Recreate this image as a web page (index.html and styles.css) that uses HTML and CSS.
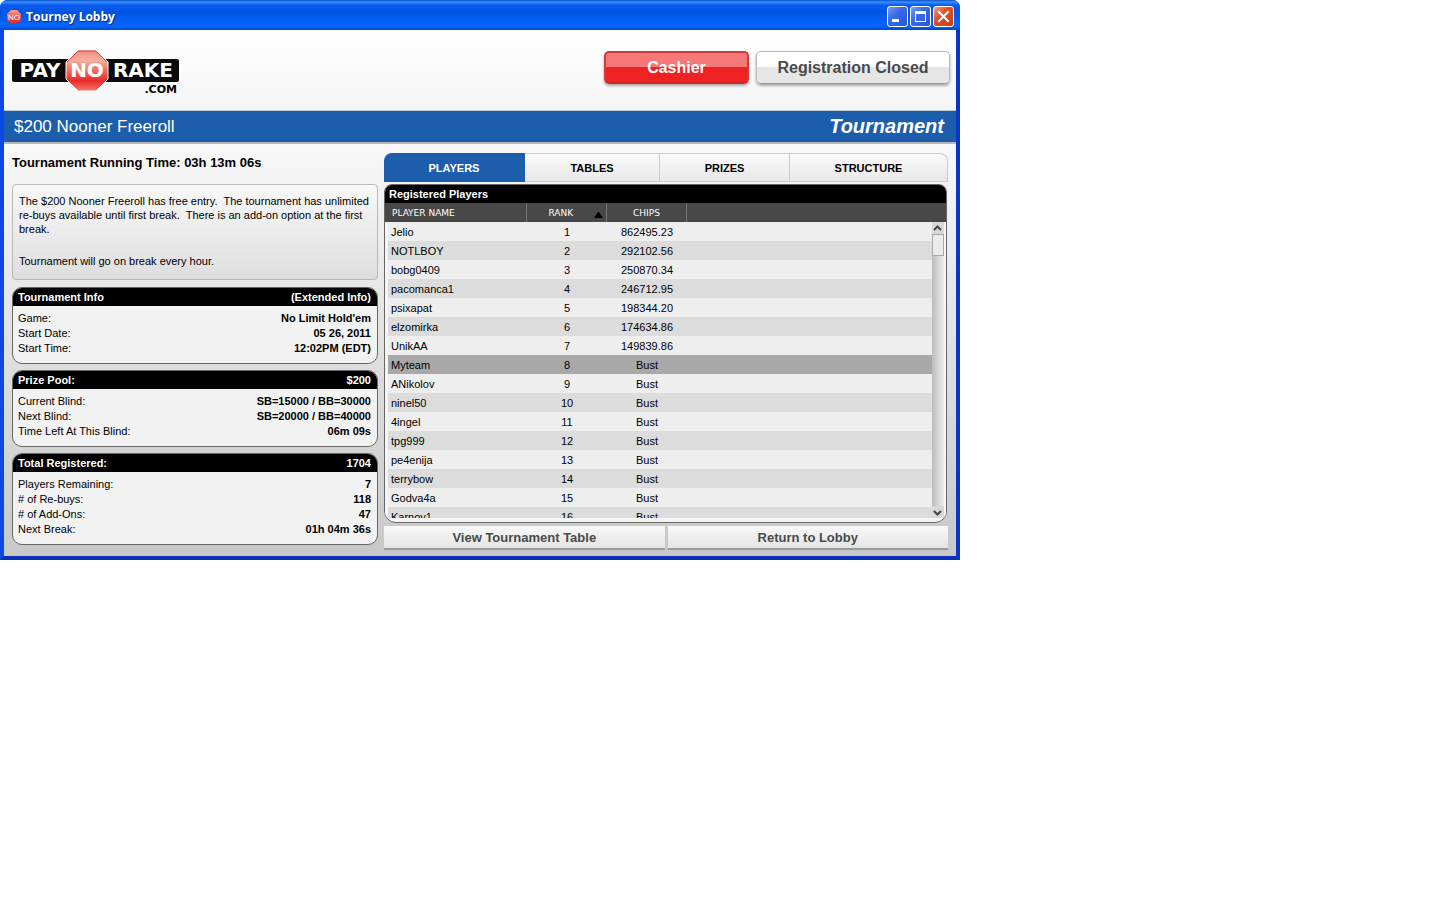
FILE: index.html
```
<!DOCTYPE html>
<html lang="en">
<head>
  <meta charset="UTF-8">
  <meta name="viewport" content="width=device-width, initial-scale=1.0">
  <title>Tourney Lobby</title>
  <link rel="stylesheet" href="styles.css">
</head>
<body>
  <div class="window">
    <div class="titlebar">
      <svg class="app-icon" width="16" height="16" viewBox="0 0 16 16">
        <defs>
          <linearGradient id="appRed" x1="0" y1="0" x2="0" y2="1">
            <stop offset="0" stop-color="#f4a08c"/>
            <stop offset="1" stop-color="#e81c1c"/>
          </linearGradient>
        </defs>
        <path d="M5 1h6l4 4v6l-4 4H5l-4-4V5z" fill="url(#appRed)"/>
        <text x="8" y="11" text-anchor="middle" class="app-icon-text">NO</text>
      </svg>
      <h1>Tourney Lobby</h1>
      <div class="win-buttons">
        <button class="win-btn" aria-label="Minimize">
          <svg width="19" height="19" viewBox="0 0 19 19"><path d="M4 12h7v3H4z" fill="#fff"/></svg>
        </button>
        <button class="win-btn" aria-label="Maximize">
          <svg width="19" height="19" viewBox="0 0 19 19"><path d="M4 4h11v11H4zM5 7v7h9V7z" fill="#fff" fill-rule="evenodd"/></svg>
        </button>
        <button class="win-btn win-close" aria-label="Close">
          <svg width="19" height="19" viewBox="0 0 19 19"><path d="M5 5l9 9M14 5l-9 9" stroke="#fff" stroke-width="2" stroke-linecap="square"/></svg>
        </button>
      </div>
    </div>

    <div class="header">
      <svg class="logo" width="170" height="46" viewBox="0 0 170 46" role="img" aria-label="PayNoRake.com">
        <defs>
          <linearGradient id="logoRed" x1="0" y1="0" x2="0" y2="1">
            <stop offset="0" stop-color="#ef8a80"/>
            <stop offset=".25" stop-color="#f6b0a0"/>
            <stop offset=".55" stop-color="#ee6055"/>
            <stop offset=".75" stop-color="#ea2a28"/>
            <stop offset="1" stop-color="#f07a70"/>
          </linearGradient>
        </defs>
        <rect x="0" y="8" width="167" height="23" rx="2" fill="#0a0a0a"/>
        <path d="M66 -1h18l12 12v17L84 40H66L54 28V11z" fill="url(#logoRed)" stroke="#fff" stroke-width="1"/>
        <path d="M55 11L66 0h18l11 11" fill="none" stroke="#d8453f" stroke-width="1"/>
        <g class="logo-text">
          <text x="28" y="26" text-anchor="middle">PAY</text>
          <text x="75" y="26" text-anchor="middle">NO</text>
          <text x="131" y="26" text-anchor="middle">RAKE</text>
        </g>
        <text x="165" y="42" text-anchor="end" class="logo-dotcom">.COM</text>
      </svg>
      <div class="header-buttons">
        <button class="big-btn big-btn-red">Cashier</button>
        <button class="big-btn big-btn-wide">Registration Closed</button>
      </div>
    </div>

    <div class="banner">
      <h2>$200 Nooner Freeroll</h2>
      <span class="banner-type">Tournament</span>
    </div>

    <div class="content">
      <div class="sidebar">
        <p class="running-time">Tournament Running Time: <span>03h 13m 06s</span></p>

        <div class="description">
          <p>The $200 Nooner Freeroll has free entry.&nbsp; The tournament has unlimited re-buys available until first break.&nbsp; There is an add-on option at the first break.</p>
          <p>Tournament will go on break every hour.</p>
        </div>

        <div class="info-box">
          <div class="info-head"><span>Tournament Info</span><a href="#">(Extended Info)</a></div>
          <dl>
            <div><dt>Game:</dt><dd>No Limit Hold'em</dd></div>
            <div><dt>Start Date:</dt><dd>05 26, 2011</dd></div>
            <div><dt>Start Time:</dt><dd>12:02PM (EDT)</dd></div>
          </dl>
        </div>

        <div class="info-box">
          <div class="info-head"><span>Prize Pool:</span><span>$200</span></div>
          <dl>
            <div><dt>Current Blind:</dt><dd>SB=15000 / BB=30000</dd></div>
            <div><dt>Next Blind:</dt><dd>SB=20000 / BB=40000</dd></div>
            <div><dt>Time Left At This Blind:</dt><dd>06m 09s</dd></div>
          </dl>
        </div>

        <div class="info-box">
          <div class="info-head"><span>Total Registered:</span><span>1704</span></div>
          <dl>
            <div><dt>Players Remaining:</dt><dd>7</dd></div>
            <div><dt># of Re-buys:</dt><dd>118</dd></div>
            <div><dt># of Add-Ons:</dt><dd>47</dd></div>
            <div><dt>Next Break:</dt><dd>01h 04m 36s</dd></div>
          </dl>
        </div>
      </div>

      <div class="main">
        <div class="tabs">
          <button class="tab active">PLAYERS</button>
          <button class="tab">TABLES</button>
          <button class="tab">PRIZES</button>
          <button class="tab">STRUCTURE</button>
        </div>

        <div class="players">
          <h3>Registered Players</h3>
          <div class="players-list">
            <table>
              <thead>
                <tr>
                  <th class="col-name">PLAYER NAME</th>
                  <th class="col-num sorted">RANK <svg width="9" height="6" viewBox="0 0 9 6"><path d="M0 6h9L5 0H4z" fill="#000"/></svg></th>
                  <th class="col-num">CHIPS</th>
                  <th></th>
                </tr>
              </thead>
              <tbody>
                <tr><td>Jelio</td><td>1</td><td>862495.23</td><td></td></tr>
                <tr><td>NOTLBOY</td><td>2</td><td>292102.56</td><td></td></tr>
                <tr><td>bobg0409</td><td>3</td><td>250870.34</td><td></td></tr>
                <tr><td>pacomanca1</td><td>4</td><td>246712.95</td><td></td></tr>
                <tr><td>psixapat</td><td>5</td><td>198344.20</td><td></td></tr>
                <tr><td>elzomirka</td><td>6</td><td>174634.86</td><td></td></tr>
                <tr><td>UnikAA</td><td>7</td><td>149839.86</td><td></td></tr>
                <tr class="selected"><td>Myteam</td><td>8</td><td>Bust</td><td></td></tr>
                <tr><td>ANikolov</td><td>9</td><td>Bust</td><td></td></tr>
                <tr><td>ninel50</td><td>10</td><td>Bust</td><td></td></tr>
                <tr><td>4ingel</td><td>11</td><td>Bust</td><td></td></tr>
                <tr><td>tpg999</td><td>12</td><td>Bust</td><td></td></tr>
                <tr><td>pe4enija</td><td>13</td><td>Bust</td><td></td></tr>
                <tr><td>terrybow</td><td>14</td><td>Bust</td><td></td></tr>
                <tr><td>Godva4a</td><td>15</td><td>Bust</td><td></td></tr>
                <tr><td>Karnov1</td><td>16</td><td>Bust</td><td></td></tr>
              </tbody>
            </table>
            <div class="scrollbar">
              <button class="scroll-btn" aria-label="Scroll up">
                <svg width="11" height="11" viewBox="0 0 11 11"><path d="M2 7l3.500-3.500L9 7" fill="none" stroke="#444" stroke-width="2"/></svg>
              </button>
              <div class="scroll-track"><div class="scroll-thumb"></div></div>
              <button class="scroll-btn" aria-label="Scroll down">
                <svg width="11" height="11" viewBox="0 0 11 11"><path d="M2 4l3.500 3.500L9 4" fill="none" stroke="#444" stroke-width="2"/></svg>
              </button>
            </div>
          </div>
        </div>

        <div class="actions">
          <button class="action-btn">View Tournament Table</button>
          <button class="action-btn">Return to Lobby</button>
        </div>
      </div>
    </div>
  </div>
</body>
</html>
```

FILE: styles.css
```
* { margin: 0; padding: 0; box-sizing: border-box; }
body {
  font-family: "Liberation Sans", Arial, sans-serif;
  font-size: 11px;
  color: #000;
  background: #fff;
}
button { font-family: inherit; border: none; cursor: pointer; }

/* window frame */
.window {
  max-width: 960px;
  border: 4px solid;
  border-top: none;
  border-color: #0a48e8 #0a36c8 #0a2fb8 #0a48e8;
  border-radius: 8px 8px 0 0;
  background: #0a48e8;
}
.titlebar {
  display: flex;
  align-items: center;
  height: 30px;
  margin: 0 -4px;
  padding: 3px 6px 0;
  border-radius: 7px 7px 0 0;
  background: linear-gradient(#0a50c8 0, #3a90ff 2px, #0a5cf0 5px, #0054e3 12px, #0560fa 22px, #0566ff 26px, #0048c8 30px);
}
.titlebar h1 {
  flex: 1;
  margin-left: 4px;
  font-family: "Open Sans", "Trebuchet MS", sans-serif;
  font-size: 12px;
  font-weight: bold;
  color: #fff;
  text-shadow: 1px 1px 1px #0a2a80;
}
.app-icon-text { font-size: 8px; fill: #fff; }
.win-buttons { display: flex; gap: 2px; }
.win-btn {
  width: 21px;
  height: 21px;
  border: 1px solid #fff;
  border-radius: 3px;
  background: linear-gradient(135deg, #7a9cf0, #3a6ae8 40%, #2456d8);
}
.win-btn svg { display: block; }
.win-close { background: linear-gradient(135deg, #f0a088, #e05028 40%, #c83c10); }

/* logo strip */
.header {
  display: flex;
  justify-content: space-between;
  align-items: flex-start;
  height: 80px;
  padding: 21px 6px 0 8px;
  background: linear-gradient(#fff, #f5f5f5);
}
.logo { overflow: visible; }
.logo-text {
  font-family: "DejaVu Sans", Verdana, sans-serif;
  font-size: 20px;
  font-weight: bold;
  fill: #fff;
}
.logo-dotcom {
  font-family: "DejaVu Sans", Verdana, sans-serif;
  font-size: 11px;
  font-weight: bold;
}
.header-buttons { display: flex; gap: 7px; }
.big-btn {
  width: 145px;
  height: 33px;
  border: 1px solid #b8b8b8;
  border-bottom-color: #999;
  border-radius: 5px;
  background: linear-gradient(#fff 47%, #e6e6e6 47%);
  box-shadow: 0 2px 3px #aaa;
  color: #4a4a4a;
  font-size: 16px;
  font-weight: bold;
}
.big-btn-wide { width: 194px; }
.big-btn-red {
  border: 2px solid #cc3c3c;
  border-bottom-color: #c82828;
  background: linear-gradient(#f47878 47%, #ee2222 47%);
  color: #fff;
}

.banner {
  display: flex;
  justify-content: space-between;
  align-items: center;
  height: 32px;
  padding: 0 12px 0 10px;
  border-top: 1px solid #b8c8d8;
  background: #1c5dac;
  color: #fff;
}
.banner h2 { font-size: 17px; font-weight: normal; }
.banner-type { font-size: 20px; font-weight: bold; font-style: italic; }

.content {
  display: grid;
  grid-template-columns: 366fr 564fr;
  gap: 6px;
  padding: 9px 8px 6px;
  border-top: 2px solid #b8b8b8;
  background: linear-gradient(#f8f8f8, #c8c8c8);
}

/* left column */
.running-time {
  height: 31px;
  padding-top: 2px;
  font-size: 13px;
  line-height: 16px;
  font-weight: bold;
}
.description {
  height: 96px;
  margin-bottom: 7px;
  padding: 9px 6px;
  border: 1px solid #b8b8b8;
  border-radius: 4px;
  background: linear-gradient(#f8f8f8, #dedede);
  line-height: 14px;
}
.description p + p { margin-top: 18px; }
.info-box {
  border: 1px solid #666;
  border-radius: 10px;
  background: #f2f2f2;
  overflow: hidden;
}
.info-box + .info-box { margin-top: 6px; }
.info-head {
  display: flex;
  justify-content: space-between;
  padding: 1px 6px 0 5px;
  background: #000;
  color: #fff;
  font-weight: bold;
  line-height: 17px;
}
.info-head a { color: #fff; text-decoration: none; }
.info-box dl { padding: 5px 6px 7px 5px; line-height: 15px; }
.info-box dl div { display: flex; justify-content: space-between; }
.info-box dd { font-weight: bold; }

/* tabs */
.tabs {
  display: grid;
  grid-template-columns: 141fr 135fr 130fr 158fr;
  height: 29px;
}
.tab {
  border: 1px solid #ccc;
  border-left: none;
  background: linear-gradient(#fafafa, #e8e8e8);
  font-size: 11px;
  font-weight: bold;
}
.tab:first-child { border-radius: 8px 0 0 0; }
.tab:last-child { border-radius: 0 8px 0 0; }
.tab.active { background: #1c5dac; border-color: #1c5dac; color: #fff; }

/* players table */
.players {
  margin: 2px 1px 3px 0;
  padding-bottom: 4px;
  border: 1px solid #666;
  border-radius: 8px 8px 12px 12px;
  background: #f5f5f5;
  overflow: hidden;
}
.players h3 {
  padding-left: 4px;
  background: #000;
  color: #fff;
  font-size: 11px;
  line-height: 18px;
}
.players-list { position: relative; height: 315px; overflow: hidden; }
.players table { width: 100%; table-layout: fixed; border-collapse: separate; border-spacing: 0; }
.players th {
  height: 19px;
  border-right: 1px solid #777;
  background: #484848;
  color: #fff;
  font-family: "DejaVu Sans", Verdana, sans-serif;
  font-size: 9px;
  font-weight: normal;
}
.players th:last-child { border-right: none; }
.players th.col-name { width: 142px; padding-left: 7px; text-align: left; }
.col-num { width: 80px; }
.players th.sorted { text-align: right; padding-right: 3px; }
.sorted svg { margin-left: 18px; vertical-align: -2px; }
.players td { height: 19px; background: #eee; text-align: center; }
.players tr:nth-child(even) td { background: #dcdcdc; }
.players tr.selected td { background: #a8a8a8; }
.players td:first-child {
  padding-left: 3px;
  border-left: 3px solid #f5f5f5;
  text-align: left;
}
.scrollbar {
  position: absolute;
  top: 19px;
  right: 0;
  bottom: 0;
  display: flex;
  flex-direction: column;
  width: 14px;
  padding-right: 2px;
  background: #f5f5f5;
}
.scroll-btn { height: 12px; background: #d8d8d8; }
.scroll-btn svg { display: block; }
.scroll-track { flex: 1; background: linear-gradient(90deg, #bbb, #eee); }
.scroll-thumb { height: 22px; border: 1px solid #aaa; background: #eaeaea; }

.actions { display: grid; grid-template-columns: 1fr 1fr; gap: 3px; }
.action-btn {
  height: 24px;
  border-bottom: 2px solid #999;
  background: linear-gradient(#f8f8f8, #e4e4e4);
  color: #4a4a4a;
  font-size: 13px;
  font-weight: bold;
}
```
